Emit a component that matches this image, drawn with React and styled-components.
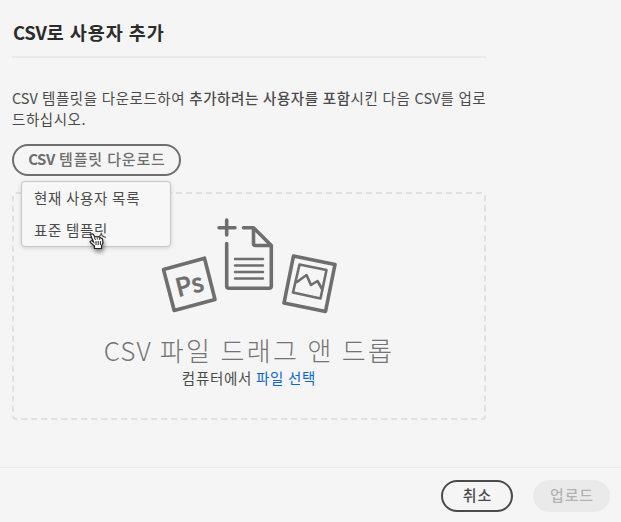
import React from "react";
import styled, { createGlobalStyle } from "styled-components";

const GlobalStyle = createGlobalStyle`
  * { box-sizing: border-box; }
  body {
    margin: 0;
    background: #f5f5f5;
    color: #4b4b4b;
    font-family: "Noto Sans CJK KR", sans-serif;
    font-size: 14px;
  }
`;

const Dialog = styled.main`
  width: 621px;
  height: 522px;
  display: flex;
  flex-direction: column;
  overflow: hidden;
`;

const Content = styled.section`
  width: 486px;
  height: 467px;
  padding-left: 12px;
  display: flex;
  flex-direction: column;
  align-items: flex-start;
`;

const Latin = styled.span`
  letter-spacing: ${(p) => p.$tracking || 0}px;
  font-weight: ${(p) => p.$weight || "inherit"};
`;

const Title = styled.h1`
  width: 100%;
  height: 58px;
  margin: 0;
  padding: 19px 0 0 1px;
  border-bottom: 2px solid #eaeaea;
  color: #2c2c2c;
  font-size: 18.5px;
  line-height: 26px;
  font-weight: 700;
  letter-spacing: 0.95px;
  white-space: nowrap;
`;

const Intro = styled.p`
  margin: 29px 0 0;
  height: 57px;
  font-size: 14.5px;
  line-height: 21px;
  letter-spacing: 0.55px;
  word-spacing: 0.4px;
  white-space: nowrap;
`;

const Strong = styled.strong`
  font-weight: 500;
`;

const MenuAnchor = styled.div`
  position: relative;
  z-index: 1;
`;

const Pill = styled.button`
  width: ${(p) => p.$width}px;
  height: 32px;
  padding: 0 0 3px 1px;
  display: flex;
  align-items: center;
  justify-content: center;
  border: 2px solid ${(p) => p.$border};
  border-radius: 16px;
  background: ${(p) => p.$fill || "transparent"};
  color: ${(p) => p.$color};
  font-family: inherit;
  font-size: 15px;
  font-weight: 500;
  letter-spacing: 0.85px;
  white-space: pre;
`;

const Menu = styled.ul`
  position: absolute;
  left: 9px;
  top: 37px;
  width: 150px;
  height: 66px;
  margin: 0;
  padding: 0;
  list-style: none;
  background: #f7f7f7;
  border: 1px solid #c8c8c8;
  border-radius: 4px;
  box-shadow: 0 1px 4px rgba(0, 0, 0, 0.15);
`;

const MenuItem = styled.li`
  height: 32px;
  padding-left: 12px;
  font-size: 14.5px;
  line-height: 32px;
  letter-spacing: 0.7px;
  white-space: nowrap;
`;

const Pointer = styled.svg`
  position: absolute;
  left: 77px;
  top: 89px;
  filter: drop-shadow(1px 3px 2px rgba(0, 0, 0, 0.45));
`;

const DropZone = styled.div`
  width: 474px;
  height: 228px;
  margin-top: 16px;
  padding-top: 23px;
  border: 2px dashed #e1e1e1;
  border-radius: 4px;
  display: flex;
  flex-direction: column;
  align-items: center;
`;

const DropTitle = styled.div`
  margin-top: 16px;
  height: 36px;
  color: #747474;
  font-size: 26px;
  font-weight: 300;
  line-height: 37px;
  letter-spacing: 2.35px;
  white-space: nowrap;
`;

const DropHint = styled.div`
  font-size: 14.5px;
  line-height: 21px;
  letter-spacing: 0.7px;
  white-space: nowrap;
`;

const FileLink = styled.a`
  color: #0d66d0;
`;

const Footer = styled.footer`
  height: 55px;
  padding: 12px 11px 0 0;
  display: flex;
  justify-content: flex-end;
  gap: 20px;
  border-top: 1px solid #e8e8e8;
`;

const PsText = styled.text`
  font-family: "Noto Sans CJK KR", sans-serif;
  font-size: 25px;
  font-weight: 500;
`;

function FilesIllustration() {
  return (
    <svg width="178" height="98" viewBox="160 217 178 98" fill="none" stroke="#6e6e6e" strokeWidth="3.6" strokeLinejoin="round" strokeLinecap="round">
      <path d="M163.500 269.500 204.500 258.200 215 299.500 174.200 310.500Z" />
      <PsText x="178" y="297" transform="rotate(-14 178 297)" fill="#6e6e6e" stroke="#6e6e6e" strokeWidth="0.5">Ps</PsText>
      <path d="M226.700 220V235M219 227.700H235M243.500 227.700H253.500L271.300 245.500V286Q271.300 288.300 269 288.300H229Q226.700 288.300 226.700 286V243.500M253.500 228V243.500Q253.500 245.500 255.500 245.500H271" />
      <path d="M235 259H263M235 265.500H263M235 272H263M235 278.500H263" strokeWidth="2.400" />
      <path d="M293.500 256 335 264.500 325.500 311.500 284 303Z" />
      <path d="M299.500 264.500 326.500 270 320.500 298.500 293 292.500ZM297 282 306.500 275 311 285 317.500 281 322 289" strokeWidth="2.600" />
    </svg>
  );
}

function HandPointer() {
  return (
    <Pointer width="17" height="17" viewBox="0 0 17 17">
      <path d="M2.500 1C4 .2 5 2 5.600 4L7.500 3.500 9.500 4 11.500 4.500 13.500 6 14 10 12.500 13V15.500H5.500V13L1.500 9.500C.5 8.500 2 7.300 3.200 8L4.500 9 2 3C1.500 2 1.700 1.300 2.500 1Z" fill="#fff" stroke="#222" strokeWidth="1.200" />
      <path d="M7 8V12M9.200 8V12M11.400 8V12M5.500 4.500 6.400 7M8.300 4.500V6.500M10.700 5V7" stroke="#222" />
    </Pointer>
  );
}

export default function App() {
  return (
    <>
      <GlobalStyle />
      <Dialog>
        <Content>
          <Title><Latin $tracking={-0.3}>CSV</Latin>로 사용자 추가</Title>
          <Intro>
            <Latin>CSV</Latin> 템플릿을 다운로드하여 <Strong>추가하려는 사용자를 포함</Strong>시킨 다음 <Latin>CSV</Latin>를 업로
            <br />
            드하십시오.
          </Intro>
          <MenuAnchor>
            <Pill $width={169} $border="#6e6e6e" $color="#6e6e6e">
              <Latin $weight={700} $tracking={-0.5}>CSV</Latin> 템플릿 다운로드
            </Pill>
            <Menu>
              <MenuItem>현재 사용자 목록</MenuItem>
              <MenuItem>표준 템플릿</MenuItem>
            </Menu>
            <HandPointer />
          </MenuAnchor>
          <DropZone>
            <FilesIllustration />
            <DropTitle><Latin $tracking={1}>CSV</Latin> 파일 드래그 앤 드롭</DropTitle>
            <DropHint>컴퓨터에서 <FileLink>파일 선택</FileLink></DropHint>
          </DropZone>
        </Content>
        <Footer>
          <Pill $width={72} $border="#4b4b4b" $color="#4b4b4b">취소</Pill>
          <Pill $width={77} $border="#eaeaea" $fill="#eaeaea" $color="#b3b3b3">업로드</Pill>
        </Footer>
      </Dialog>
    </>
  );
}
